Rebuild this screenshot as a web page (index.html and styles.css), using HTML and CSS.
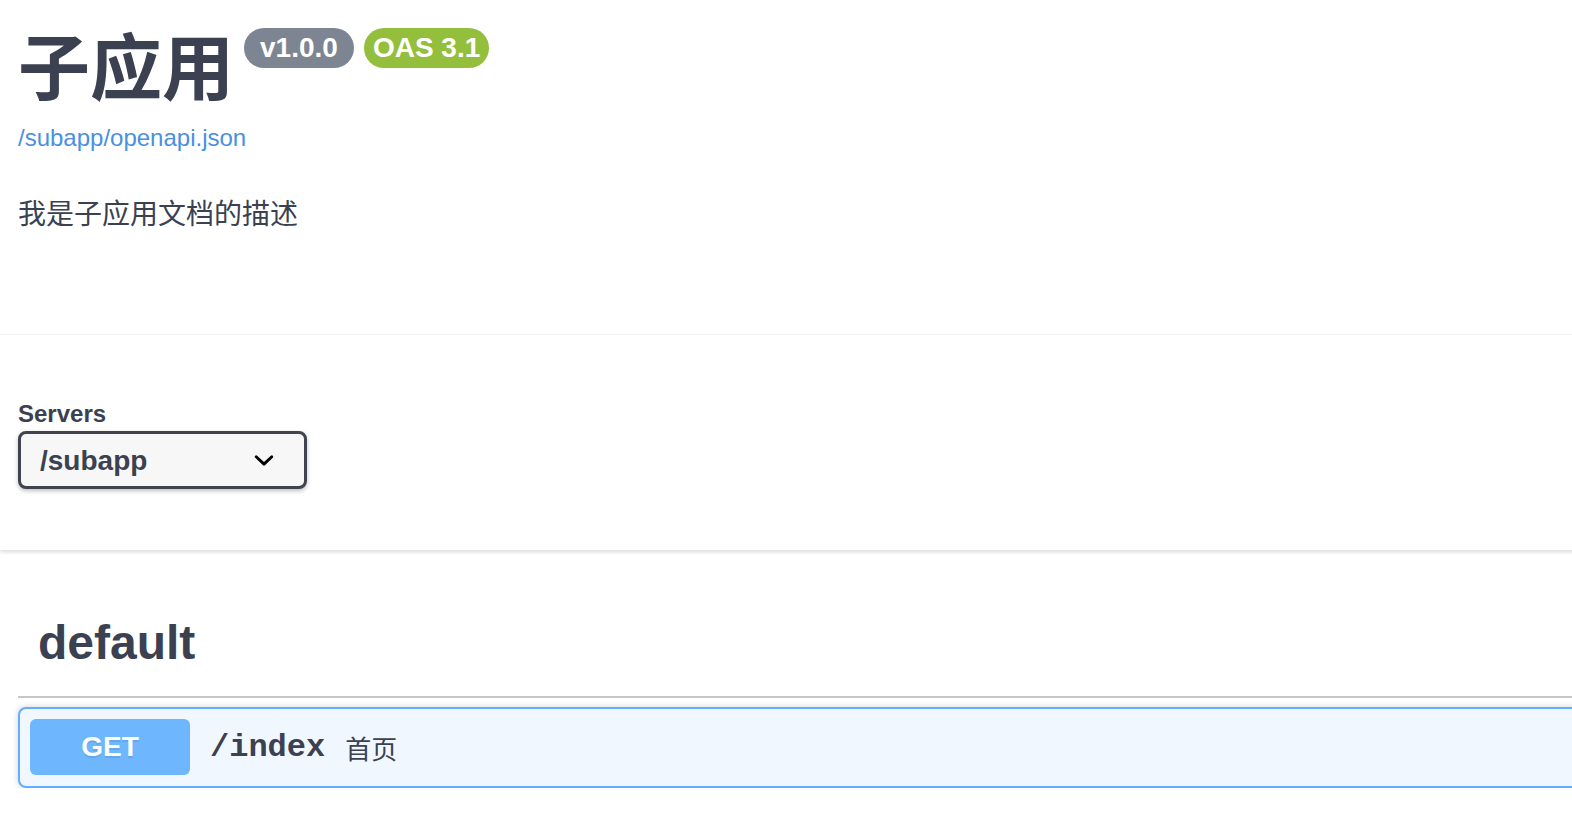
FILE: index.html
```html
<!DOCTYPE html>
<html lang="zh-CN">
<head>
<meta charset="utf-8">
<title>子应用</title>
<link rel="stylesheet" href="styles.css">
</head>
<body>
<div class="page">
  <section class="info">
    <div class="wrapper">
      <div class="title-row">
        <h2 class="title">子应用</h2>
        <span class="badge badge-version">v1.0.0</span>
        <span class="badge badge-oas">OAS 3.1</span>
      </div>
      <a class="spec-link" href="#">/subapp/openapi.json</a>
      <p class="description">我是子应用文档的描述</p>
    </div>
  </section>

  <section class="scheme-container">
    <div class="wrapper">
      <div class="servers-title">Servers</div>
      <div class="server-select">
        <span class="server-value">/subapp</span>
        <svg class="chevron" width="40" height="40" viewBox="0 0 20 20" aria-hidden="true"><path d="M13.418 7.859a.695.695 0 0 1 .978 0 .68.68 0 0 1 0 .969l-3.908 3.83a.697.697 0 0 1-.979 0l-3.908-3.83a.68.68 0 0 1 0-.969.695.695 0 0 1 .978 0L10 11l3.418-3.141z" fill="#000"/></svg>
      </div>
    </div>
  </section>

  <section class="tags">
    <div class="wrapper">
      <h3 class="opblock-tag">default</h3>
      <div class="opblock">
        <div class="opblock-summary">
          <span class="method">GET</span>
          <span class="path">/index</span>
          <span class="summary">首页</span>
        </div>
      </div>
    </div>
  </section>
</div>
</body>
</html>
```

FILE: styles.css
```css
html, body {
  margin: 0;
  padding: 0;
  overflow: hidden;
  background: #fff;
}

body {
  font-family: "Liberation Sans", "Noto Sans CJK SC", sans-serif;
  color: #3b4151;
}

.page {
  width: 1700px;
}

.wrapper {
  padding: 0 18px;
}

/* ---------- info ---------- */
.info {
  padding: 20px 0 102px;
  border-bottom: 1px solid #f6f6f6;
}

.title-row {
  display: flex;
  align-items: flex-start;
}

.title {
  margin: 0;
  font-family: "Noto Sans CJK SC", sans-serif;
  font-size: 72px;
  font-weight: 700;
  line-height: 86px;
  color: #3b4151;
}

.badge {
  margin-top: 8px;
  height: 40px;
  line-height: 40px;
  border-radius: 20px;
  color: #fff;
  font-family: "Liberation Sans", sans-serif;
  font-size: 28px;
  font-weight: 700;
  white-space: nowrap;
}

.badge-version {
  margin-left: 10px;
  padding: 0 16px;
  background: #7d8492;
}

.badge-oas {
  margin-left: 10px;
  padding: 0 9px;
  background: #93bf3c;
}

.spec-link {
  display: block;
  margin-top: 18px;
  font-size: 24px;
  line-height: 28px;
  color: #4990e2;
  text-decoration: none;
}

.description {
  margin: 40px 0 0;
  font-family: "Noto Sans CJK SC", sans-serif;
  font-size: 28px;
  line-height: 40px;
  color: #3b4151;
}

/* ---------- servers ---------- */
.scheme-container {
  padding: 64px 0 61px;
  background: #fff;
  box-shadow: 0 2px 4px 0 rgba(0, 0, 0, 0.15);
}

.servers-title {
  font-size: 24px;
  font-weight: 700;
  line-height: 30px;
}

.server-select {
  margin-top: 2px;
  width: 283px;
  height: 52px;
  box-sizing: content-box;
  border: 3px solid #41444e;
  border-radius: 8px;
  background: #f7f7f7;
  box-shadow: 0 2px 4px 0 rgba(0, 0, 0, 0.25);
  display: flex;
  align-items: center;
  justify-content: space-between;
  padding: 0;
}

.server-value {
  padding-left: 19px;
  padding-top: 2px;
  font-size: 28px;
  font-weight: 700;
  color: #3b4151;
}

.chevron {
  margin-right: 20px;
  display: block;
}

/* ---------- operations ---------- */
.tags {
  margin-top: 40px;
}

.opblock-tag {
  margin: 0;
  padding: 20px 40px 20px 20px;
  font-size: 48px;
  font-weight: 700;
  line-height: 66px;
  color: #3b4151;
  border-bottom: 2px solid rgba(59, 65, 81, 0.3);
}

.opblock {
  margin-top: 9px;
  border: 2px solid #61affe;
  border-radius: 8px;
  background: #f0f7ff;
  box-shadow: 0 0 6px rgba(0, 0, 0, 0.19);
}

.opblock-summary {
  display: flex;
  align-items: center;
  padding: 10px 10px 11px;
}

.method {
  width: 160px;
  height: 56px;
  line-height: 56px;
  border-radius: 6px;
  background: #61affe;
  color: #fff;
  text-align: center;
  font-size: 28px;
  font-weight: 700;
  text-shadow: 0 2px 0 rgba(0, 0, 0, 0.1);
  opacity: 0.9;
}

.path {
  padding: 0 20px;
  font-family: "Liberation Mono", monospace;
  font-size: 32px;
  font-weight: 700;
  color: #3b4151;
}

.summary {
  font-family: "Noto Sans CJK SC", sans-serif;
  font-size: 26px;
  color: #3b4151;
}
```
